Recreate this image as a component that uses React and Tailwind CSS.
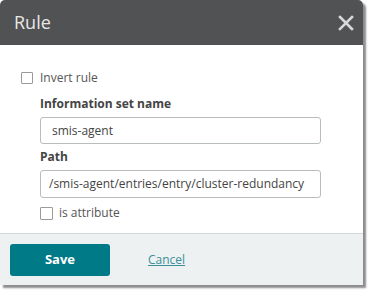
export default function App() {
  return (
    <div className="w-[374px] h-[295px] bg-white" style={{ fontFamily: '"Open Sans", sans-serif' }}>
      <div className="w-[363px] h-[285px] flex flex-col rounded-t-[5px] bg-white shadow-[3px_3px_2px_rgba(0,0,0,0.45)]">
        {/* Header */}
        <div className="h-[45px] shrink-0 flex items-center justify-between pl-[14px] pr-[8px] bg-[#515254] rounded-t-[5px]">
          <span className="text-[18px] text-[#e8e8e8]">Rule</span>
          <svg width="16" height="16" viewBox="0 0 16 16" className="mr-[1px]">
            <path d="M2 2L14 14M14 2L2 14" stroke="#d9d9d9" strokeWidth="2.6" strokeLinecap="square" />
          </svg>
        </div>

        {/* Body */}
        <div className="flex-1 pt-[26px] pl-[21px]">
          <label className="flex items-center gap-[7px] h-[13px]">
            <span className="w-[12px] h-[12px] border border-[#9a9a9a] rounded-[1px] bg-white" />
            <span className="text-[12px] text-[#555]">Invert rule</span>
          </label>

          <div className="pl-[19px] mt-[12px]">
            <div className="text-[12px] font-bold text-[#444] leading-[16px]">Information set name</div>
            <div className="mt-[5px] w-[281px] h-[27px] border border-[#b7bcbf] rounded-[3px] flex items-center pl-[11px] text-[12px] text-[#444]">
              smis-agent
            </div>

            <div className="mt-[5px] text-[12px] font-bold text-[#444] leading-[16px]">Path</div>
            <div className="mt-[5px] w-[281px] h-[28px] border border-[#b7bcbf] rounded-[3px] flex items-center pl-[8px] text-[12px] text-[#444]">
              /smis-agent/entries/entry/cluster-redundancy
            </div>

            <label className="flex items-center gap-[6px] mt-[6px]">
              <span className="w-[13px] h-[13px] border border-[#9a9a9a] rounded-[1px] bg-white" />
              <span className="text-[12px] text-[#555]">is attribute</span>
            </label>
          </div>
        </div>

        {/* Footer */}
        <div className="h-[52px] shrink-0 border-t border-[#d3d7d9] bg-[#eef1f2] flex items-center pl-[10px]">
          <button className="w-[100px] h-[32px] rounded-[3px] bg-[#007a87] text-white text-[13px] font-bold">
            Save
          </button>
          <a href="#" className="ml-[38px] text-[12px] text-[#3a8f9a] underline">
            Cancel
          </a>
        </div>
      </div>
    </div>
  );
}
